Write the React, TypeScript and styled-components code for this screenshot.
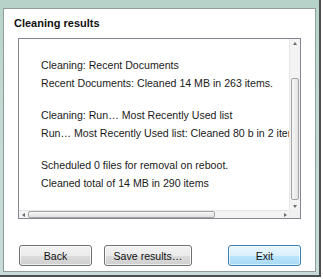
import styled, { createGlobalStyle } from 'styled-components';

const Global = createGlobalStyle`
  html, body { margin: 0; padding: 0; background: #fff; }
  body { font-family: "Liberation Sans", Arial, sans-serif; }
`;

const Frame = styled.div`
  width: 313px;
  height: 264px;
  padding: 8px 3px 3px 3px;
  background: linear-gradient(#b7d3c9, #c3d9d3 40%, #c9dbd8);
  border-right: 2px solid #4b4f4f;
  border-bottom: 2px solid #4b4f4f;
  box-sizing: content-box;
`;

const Dialog = styled.div`
  height: 100%;
  background: #fff;
  border: 1px solid #8f9e9c;
  box-sizing: border-box;
  display: flex;
  flex-direction: column;
  padding: 5px 14px 0 14px;
`;

const Title = styled.div`
  font-weight: bold;
  font-size: 11px;
  color: #111;
  line-height: 16px;
  margin-left: -4px;
  margin-top: 1px;
`;

const Box = styled.div`
  margin-top: 7px;
  height: 181px;
  border: 1px solid #828790;
  display: grid;
  grid-template-columns: 1fr 11px;
  grid-template-rows: 1fr 8px;
  box-sizing: border-box;
`;

const Content = styled.div`
  overflow: hidden;
  white-space: nowrap;
  padding: 17px 0 0 22px;
  font-size: 10.6px;
  color: #1a1a1a;
`;

const Line = styled.div<{ $gap?: boolean }>`
  line-height: 18px;
  margin-top: ${(p) => (p.$gap ? '14px' : '0')};
`;

const VScroll = styled.div`
  background: #f3f3f3;
  border-left: 1px solid #e6e6e6;
  display: flex;
  flex-direction: column;
  align-items: center;
`;

const HScroll = styled.div`
  background: #f3f3f3;
  border-top: 1px solid #e6e6e6;
  display: flex;
  align-items: center;
`;

const Corner = styled.div`
  background: #f0f0f0;
`;

const Arrow = styled.div`
  width: 9px;
  height: 9px;
  display: flex;
  align-items: center;
  justify-content: center;
  flex: none;
`;

const VThumb = styled.div`
  width: 8px;
  height: 122px;
  margin-top: 30px;
  border: 1px solid #a4a4a4;
  border-radius: 2px;
  background: linear-gradient(90deg, #f6f6f6, #e4e4e4);
  box-sizing: border-box;
`;

const HThumb = styled.div`
  width: 187px;
  height: 7px;
  border: 1px solid #a4a4a4;
  border-radius: 2px;
  background: linear-gradient(#f6f6f6, #e2e2e2);
  box-sizing: border-box;
`;

const Spacer = styled.div`
  flex: 1;
`;

const Buttons = styled.div`
  margin-top: 26px;
  display: flex;
  align-items: center;
  padding-left: 1px;
`;

const Button = styled.div<{ $w: number; $def?: boolean; $ml?: number }>`
  width: ${(p) => p.$w}px;
  height: 21px;
  margin-left: ${(p) => p.$ml ?? 0}px;
  box-sizing: border-box;
  border: 1px solid ${(p) => (p.$def ? '#3c7fb1' : '#707070')};
  border-radius: 3px;
  background: ${(p) =>
    p.$def
      ? 'linear-gradient(#eaf6fd 0%, #d9f0fc 50%, #bee6fd 50%, #a7d9f5 100%)'
      : 'linear-gradient(#f2f2f2 0%, #ebebeb 50%, #dddddd 50%, #cfcfcf 100%)'};
  box-shadow: inset 0 0 0 1px ${(p) => (p.$def ? 'rgba(255,255,255,0.6)' : 'rgba(255,255,255,0.7)')};
  font-size: 10.6px;
  color: #111;
  display: flex;
  align-items: center;
  justify-content: center;
`;

const Tri = ({ dir }: { dir: 'up' | 'down' | 'left' | 'right' }) => {
  const pts = {
    up: '4,2 6,5 2,5',
    down: '2,3 6,3 4,6',
    left: '5,2 5,6 2,4',
    right: '3,2 3,6 6,4',
  }[dir];
  return (
    <svg width="8" height="8" viewBox="0 0 8 8">
      <polygon points={pts} fill="#6a6a6a" />
    </svg>
  );
};

export default function App() {
  return (
    <>
      <Global />
      <Frame>
        <Dialog>
          <Title>Cleaning results</Title>
          <Box>
            <Content>
              <Line>Cleaning: Recent Documents</Line>
              <Line>Recent Documents: Cleaned 14 MB in 263 items.</Line>
              <Line $gap>Cleaning: Run… Most Recently Used list</Line>
              <Line>Run… Most Recently Used list: Cleaned 80 b in 2 items.</Line>
              <Line $gap>Scheduled 0 files for removal on reboot.</Line>
              <Line>Cleaned total of 14 MB in 290 items</Line>
            </Content>
            <VScroll>
              <Arrow><Tri dir="up" /></Arrow>
              <VThumb />
              <Spacer />
              <Arrow><Tri dir="down" /></Arrow>
            </VScroll>
            <HScroll>
              <Arrow><Tri dir="left" /></Arrow>
              <HThumb />
              <Spacer />
              <Arrow><Tri dir="right" /></Arrow>
            </HScroll>
            <Corner />
          </Box>
          <Buttons>
            <Button $w={73}>Back</Button>
            <Button $w={88} $ml={12}>Save results…</Button>
            <Button $w={73} $ml={36} $def>Exit</Button>
          </Buttons>
        </Dialog>
      </Frame>
    </>
  );
}
